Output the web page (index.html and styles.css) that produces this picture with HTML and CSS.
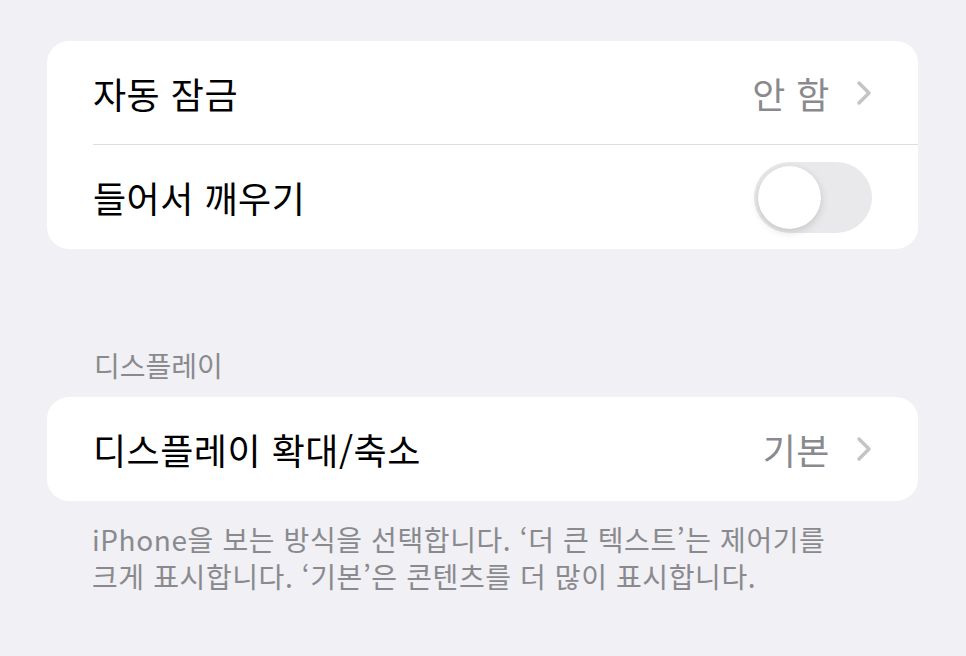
FILE: index.html
```html
<!DOCTYPE html>
<html lang="ko">
<head>
    <meta charset="UTF-8">
    <meta name="viewport" content="width=device-width, initial-scale=1.0">
    <title>설정</title>
    <link rel="stylesheet" href="styles.css">
</head>
<body>

<div class="group">
    <div class="row">
        <span class="label">자동 잠금</span>
        <span class="value">안 함</span>
        <svg class="chevron" viewBox="0 0 16 26"><path d="M3 3 L13 13 L3 23" /></svg>
    </div>
    <div class="row">
        <span class="label">들어서 깨우기</span>
        <div class="toggle"><div class="knob"></div></div>
    </div>
</div>

<div class="section-title">디스플레이</div>

<div class="group">
    <div class="row">
        <span class="label">디스플레이 확대/축소</span>
        <span class="value">기본</span>
        <svg class="chevron" viewBox="0 0 16 26"><path d="M3 3 L13 13 L3 23" /></svg>
    </div>
</div>

<p class="footer">iPhone을 보는 방식을 선택합니다. ‘더 큰 텍스트’는 제어기를<br>크게 표시합니다. ‘기본’은 콘텐츠를 더 많이 표시합니다.</p>

</body>
</html>
```

FILE: styles.css
```css
body {
    margin: 0;
    background-color: #f0f0f5;
    font-family: "Noto Sans CJK KR", "Noto Sans", sans-serif;
    padding: 41px 48px 0 47px;
}
.group {
    background-color: white;
    border-radius: 22px;
    overflow: hidden;
}
.row {
    display: flex;
    align-items: center;
    height: 104px;
    margin-left: 46px;
    padding-right: 46px;
    border-bottom: 1.5px solid #dedee2;
    box-sizing: border-box;
}
.row:last-child {
    border-bottom: none;
}
.label {
    flex: 1;
    font-size: 36px;
    color: black;
    letter-spacing: 0.5px;
}
.value {
    font-size: 36px;
    color: #8a8a8e;
    letter-spacing: 0.5px;
    margin-right: 26px;
}
.chevron {
    width: 16px;
    height: 26px;
    fill: none;
    stroke: #c4c4c7;
    stroke-width: 3.5;
    stroke-linecap: round;
    stroke-linejoin: round;
}
.toggle {
    width: 118px;
    height: 71px;
    border-radius: 36px;
    background-color: #e9e9eb;
    padding: 4px;
    box-sizing: border-box;
}
.knob {
    width: 63px;
    height: 63px;
    border-radius: 50%;
    background-color: white;
    box-shadow: 0 3px 8px rgba(0, 0, 0, 0.15), 0 0 1px rgba(0, 0, 0, 0.1);
}
.section-title {
    margin: 96px 0 0 47px;
    height: 52px;
    font-size: 28px;
    color: #8a8a8e;
    letter-spacing: 0;
}
.footer {
    margin: 20px 0 0 45px;
    font-size: 28px;
    line-height: 37px;
    color: #8a8a8e;
    letter-spacing: 0.6px;
}
```
